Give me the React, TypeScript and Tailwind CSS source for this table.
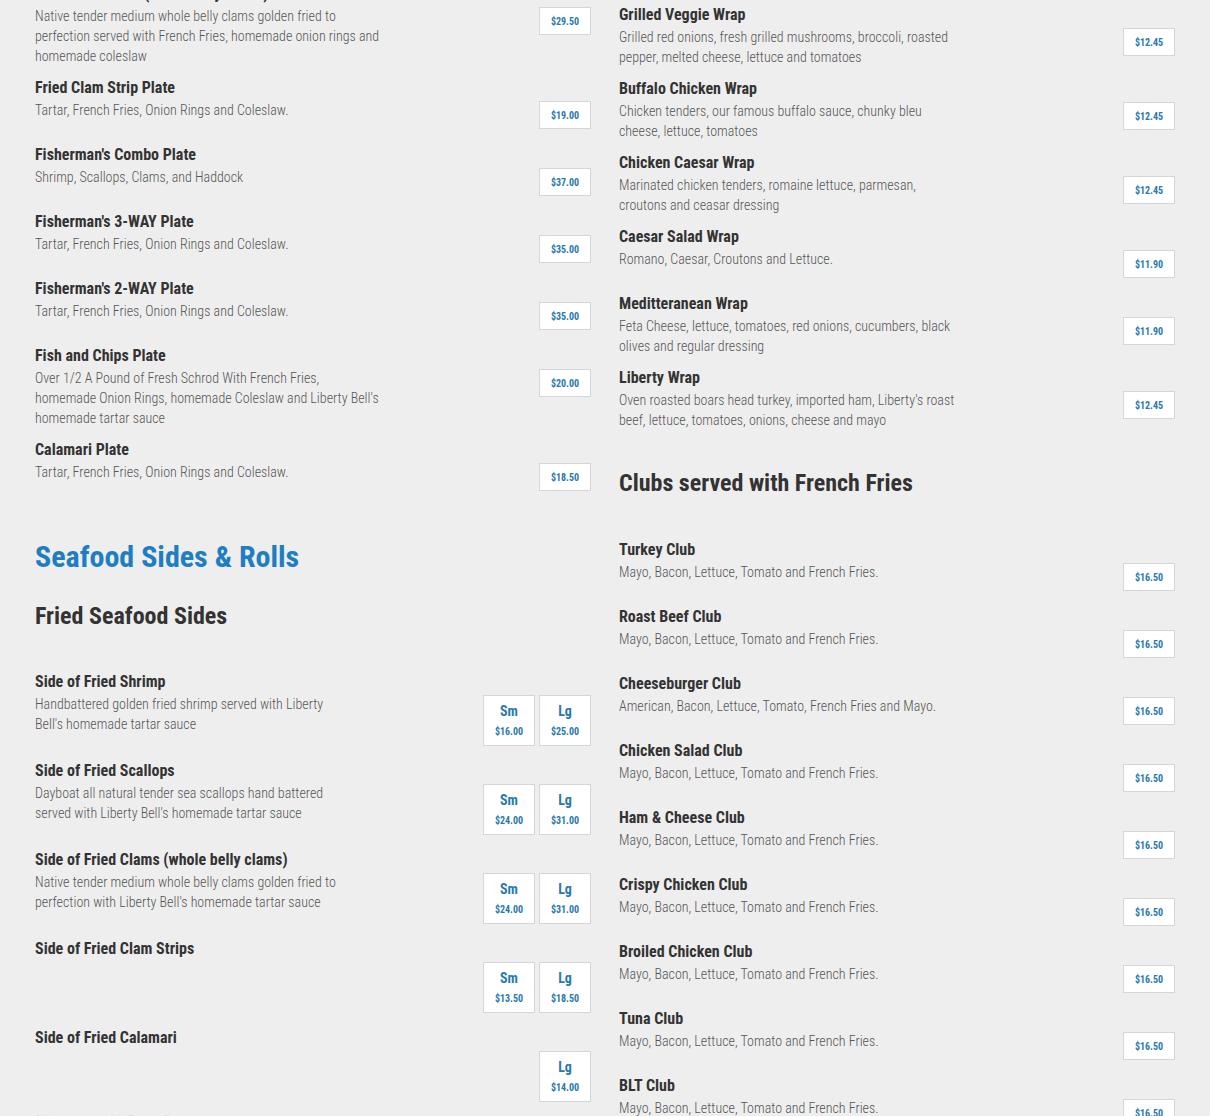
const font = { fontFamily: '"Roboto Condensed", "Liberation Sans Narrow", "Roboto", sans-serif' };

type Price = { size?: string; amount: string };
type Entry = { title: string; desc?: string[]; prices: Price[] };

const wraps: Entry[] = [
  {
    title: "Grilled Veggie Wrap",
    desc: ["Grilled red onions, fresh grilled mushrooms, broccoli, roasted", "pepper, melted cheese, lettuce and tomatoes"],
    prices: [{ amount: "$12.45" }],
  },
  {
    title: "Buffalo Chicken Wrap",
    desc: ["Chicken tenders, our famous buffalo sauce, chunky bleu", "cheese, lettuce, tomatoes"],
    prices: [{ amount: "$12.45" }],
  },
  {
    title: "Chicken Caesar Wrap",
    desc: ["Marinated chicken tenders, romaine lettuce, parmesan,", "croutons and ceasar dressing"],
    prices: [{ amount: "$12.45" }],
  },
  { title: "Caesar Salad Wrap", desc: ["Romano, Caesar, Croutons and Lettuce."], prices: [{ amount: "$11.90" }] },
  {
    title: "Meditteranean Wrap",
    desc: ["Feta Cheese, lettuce, tomatoes, red onions, cucumbers, black", "olives and regular dressing"],
    prices: [{ amount: "$11.90" }],
  },
  {
    title: "Liberty Wrap",
    desc: ["Oven roasted boars head turkey, imported ham, Liberty's roast", "beef, lettuce, tomatoes, onions, cheese and mayo"],
    prices: [{ amount: "$12.45" }],
  },
];

const mbl = ["Mayo, Bacon, Lettuce, Tomato and French Fries."];
const clubs: Entry[] = [
  { title: "Turkey Club", desc: mbl, prices: [{ amount: "$16.50" }] },
  { title: "Roast Beef Club", desc: mbl, prices: [{ amount: "$16.50" }] },
  { title: "Cheeseburger Club", desc: ["American, Bacon, Lettuce, Tomato, French Fries and Mayo."], prices: [{ amount: "$16.50" }] },
  { title: "Chicken Salad Club", desc: mbl, prices: [{ amount: "$16.50" }] },
  { title: "Ham & Cheese Club", desc: mbl, prices: [{ amount: "$16.50" }] },
  { title: "Crispy Chicken Club", desc: mbl, prices: [{ amount: "$16.50" }] },
  { title: "Broiled Chicken Club", desc: mbl, prices: [{ amount: "$16.50" }] },
  { title: "Tuna Club", desc: mbl, prices: [{ amount: "$16.50" }] },
  { title: "BLT Club", desc: mbl, prices: [{ amount: "$16.50" }] },
];

const tfoc = ["Tartar, French Fries, Onion Rings and Coleslaw."];
const plates: Entry[] = [
  {
    title: "Fried Clam Plate (whole belly clams)",
    desc: [
      "Native tender medium whole belly clams golden fried to",
      "perfection served with French Fries, homemade onion rings and",
      "homemade coleslaw",
    ],
    prices: [{ amount: "$29.50" }],
  },
  { title: "Fried Clam Strip Plate", desc: tfoc, prices: [{ amount: "$19.00" }] },
  { title: "Fisherman's Combo Plate", desc: ["Shrimp, Scallops, Clams, and Haddock"], prices: [{ amount: "$37.00" }] },
  { title: "Fisherman's 3-WAY Plate", desc: tfoc, prices: [{ amount: "$35.00" }] },
  { title: "Fisherman's 2-WAY Plate", desc: tfoc, prices: [{ amount: "$35.00" }] },
  {
    title: "Fish and Chips Plate",
    desc: [
      "Over 1/2 A Pound of Fresh Schrod With French Fries,",
      "homemade Onion Rings, homemade Coleslaw and Liberty Bell's",
      "homemade tartar sauce",
    ],
    prices: [{ amount: "$20.00" }],
  },
  { title: "Calamari Plate", desc: tfoc, prices: [{ amount: "$18.50" }] },
];

const sides: Entry[] = [
  {
    title: "Side of Fried Shrimp",
    desc: ["Handbattered golden fried shrimp served with Liberty", "Bell's homemade tartar sauce"],
    prices: [
      { size: "Sm", amount: "$16.00" },
      { size: "Lg", amount: "$25.00" },
    ],
  },
  {
    title: "Side of Fried Scallops",
    desc: ["Dayboat all natural tender sea scallops hand battered", "served with Liberty Bell's homemade tartar sauce"],
    prices: [
      { size: "Sm", amount: "$24.00" },
      { size: "Lg", amount: "$31.00" },
    ],
  },
  {
    title: "Side of Fried Clams (whole belly clams)",
    desc: ["Native tender medium whole belly clams golden fried to", "perfection with Liberty Bell's homemade tartar sauce"],
    prices: [
      { size: "Sm", amount: "$24.00" },
      { size: "Lg", amount: "$31.00" },
    ],
  },
  {
    title: "Side of Fried Clam Strips",
    prices: [
      { size: "Sm", amount: "$13.50" },
      { size: "Lg", amount: "$18.50" },
    ],
  },
  { title: "Side of Fried Calamari", prices: [{ size: "Lg", amount: "$14.00" }] },
];

const PriceBox = ({ p }: { p: Price }) =>
  p.size ? (
    <div className="flex h-[51px] w-[52px] flex-col items-center border border-[#d6d6d6] bg-white pt-[5px]">
      <span className="text-[14px] font-bold leading-[20px] text-[#2a79ae]">{p.size}</span>
      <span className="text-[10px] font-bold leading-[22px] text-[#2a79ae]">{p.amount}</span>
    </div>
  ) : (
    <div className="flex h-[28px] w-[52px] items-center justify-center border border-[#d6d6d6] bg-white text-[10px] font-bold text-[#2a79ae]">
      {p.amount}
    </div>
  );

const MenuItem = ({ item }: { item: Entry }) => {
  const sized = item.prices.some((p) => p.size);
  return (
    <div className="flex justify-between pb-[10px]">
      <div className="min-w-0">
        <h4 className="text-[16px] font-bold leading-[23px] text-[#333333]">{item.title}</h4>
        {item.desc && (
          <p className="whitespace-nowrap pt-[1px] text-[14px] font-light leading-[20px] text-[#555555]">
            {item.desc.map((line, i) => (
              <span key={i} className="block">
                {line}
              </span>
            ))}
          </p>
        )}
      </div>
      <div className={`flex shrink-0 items-start gap-1 pt-[25px] ${sized ? "pb-[3px]" : "pb-[4px]"}`}>
        {item.prices.map((p, i) => (
          <PriceBox key={i} p={p} />
        ))}
      </div>
    </div>
  );
};

export default function App() {
  return (
    <div className="h-[1116px] overflow-hidden bg-[#eeeeee] px-[35px]" style={font}>
      <div className="grid grid-cols-2 gap-x-[28px]">
        <div className="mt-[-18px]">
          {plates.map((it) => (
            <MenuItem key={it.title} item={it} />
          ))}
          <h2 className="mt-[34px] text-[30px] font-bold leading-[36px] text-[#1e7ec1]">Seafood Sides &amp; Rolls</h2>
          <h3 className="mt-[26px] mb-[39px] text-[24px] font-bold leading-[30px] text-[#333333]">Fried Seafood Sides</h3>
          {sides.map((it) => (
            <MenuItem key={it.title} item={it} />
          ))}
          <p className="mt-[-4px] text-[14px] font-light text-[#dedede]">Sides come with Tartar Sauce</p>
        </div>
        <div className="mt-[3px]">
          {wraps.map((it) => (
            <MenuItem key={it.title} item={it} />
          ))}
          <h3 className="mt-[28px] mb-[40px] text-[24px] font-bold leading-[30px] text-[#333333]">
            Clubs served with French Fries
          </h3>
          {clubs.map((it) => (
            <MenuItem key={it.title} item={it} />
          ))}
        </div>
      </div>
    </div>
  );
}
